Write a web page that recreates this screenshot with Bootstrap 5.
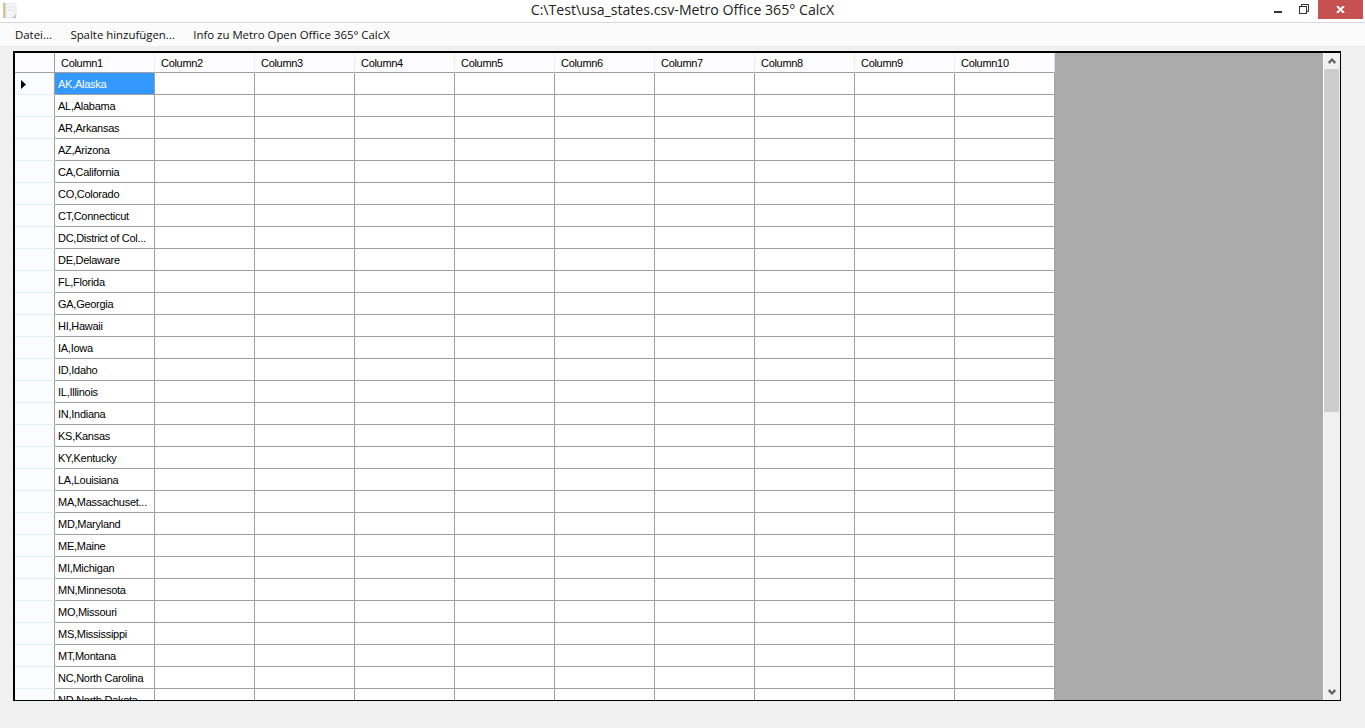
<!DOCTYPE html>
<html lang="de">
<head>
<meta charset="utf-8">
<title>C:\Test\usa_states.csv-Metro Office 365° CalcX</title>
<link href="https://cdn.jsdelivr.net/npm/bootstrap@5.3.0/dist/css/bootstrap.min.css" rel="stylesheet">
<style>
html, body { height: 100%; overflow: hidden; }
body { background: #f0f0f0; color: #000; }
.app-win { height: 728px; }
.app-title { height: 23px; background: #fff; border-bottom: 1px solid #d9d9d9; font: 14.15px/20px "Open Sans", sans-serif; color: #222; }
.app-doc { width: 14px; height: 16px; margin: 3px 0 0 3px; }
.app-name { left: 0; right: 0; top: 0; text-align: center; pointer-events: none; }
.win-btn { width: 25px; height: 19px; padding: 4px 2px 0 0; }
.win-min { width: 26px; padding: 11px 2px 0 0; }
.win-close { width: 45px; height: 19px; background: #c75050; margin-left: 1px; margin-right: 2px; }
.app-menu { height: 23px; background: #fbfbfb; font: 11.4px/23px "Open Sans", sans-serif; color: #111; padding-left: 15px; gap: 18.5px; }
.grid-frame { margin: 5px 24px 0 13px; height: 650px; border: 1px solid #000; border-left-width: 2px; border-top-width: 2px; }
.grid-area { background: #ababab; min-width: 0; overflow: hidden; }
.sheet { border-collapse: separate; border-spacing: 0; table-layout: fixed; width: 1040px; font: 11px "Liberation Sans", sans-serif; letter-spacing: -.27px; background: #fff; }
.sheet th, .sheet td { height: 22px; padding: 0 0 0 3px; border-right: 1px solid #a0a0a0; border-bottom: 1px solid #a0a0a0; white-space: nowrap; overflow: hidden; vertical-align: middle; font-weight: 400; }
.sheet thead th { height: 20px; padding-left: 6px; border-right-color: #e6efff; background: #fdfdff; letter-spacing: -.3px; }
.sheet thead th:first-child { border-right-color: #a0a0a0; }
.sheet thead th:last-child { border-right-color: #d5deee; }
.sheet th.rh { padding: 0 0 0 6px; border-bottom-color: #e6efff; background: #fafcff; }
.sheet td.cur { background: #3399ff; color: #fff; }
.rh-mark { margin-top: 1px; }
.rh-w { width: 40px; }
.col-w { width: 100px; }
.scroll-rail { width: 16px; margin-left: 1px; background: #f0f0f0; }
.scroll-btn { height: 16px; }
.scroll-thumb { height: 343px; background: #cdcdcd; margin: 0 1px 0 0; }
</style>
</head>
<body>
<div class="app-win d-flex flex-column">
  <header class="app-title d-flex justify-content-between position-relative">
    <svg class="app-doc" viewBox="0 0 14 16"><rect x="0" y="0" width="3" height="15" fill="#d8c49a"/><rect x="3" y="0" width="10" height="15" fill="#f3f5f8" stroke="#e3e6ea"/><path d="M5 4h6M5 7h6" stroke="#dfe6f2"/><path d="M9 15l4-4v4z" fill="#c9c9c9"/></svg>
    <div class="app-name position-absolute">C:\Test\usa_states.csv-Metro Office 365° CalcX</div>
    <div class="d-flex">
      <div class="win-btn win-min d-flex justify-content-center"><svg class="d-block" width="8" height="2"><rect width="8" height="2" fill="#333"/></svg></div>
      <div class="win-btn d-flex justify-content-center"><svg class="d-block" width="10" height="10" viewBox="0 0 10 10" fill="none" stroke="#333"><path d="M2.5 2.5V.5h7v7h-2"/><rect x=".5" y="2.5" width="7" height="7"/></svg></div>
      <div class="win-close d-flex align-items-center justify-content-center"><svg width="9" height="7" viewBox="0 0 9 7" fill="none" stroke="#fff" stroke-width="2"><path d="M1 0l7 7M8 0L1 7"/></svg></div>
    </div>
  </header>
  <nav class="app-menu d-flex">
    <span>Datei...</span><span>Spalte hinzufügen...</span><span>Info zu Metro Open Office 365° CalcX</span>
  </nav>
  <section class="grid-frame d-flex bg-white">
    <div class="grid-area flex-grow-1">
      <table class="sheet">
        <colgroup><col class="rh-w"><col class="col-w"><col class="col-w"><col class="col-w"><col class="col-w"><col class="col-w"><col class="col-w"><col class="col-w"><col class="col-w"><col class="col-w"><col class="col-w"></colgroup>
        <thead><tr><th></th><th>Column1</th><th>Column2</th><th>Column3</th><th>Column4</th><th>Column5</th><th>Column6</th><th>Column7</th><th>Column8</th><th>Column9</th><th>Column10</th></tr></thead>
        <tbody>
          <tr><th class="rh"><svg class="d-block rh-mark" width="5" height="9" viewBox="0 0 5 9"><path d="M0 0l5 4.5L0 9z" fill="#000"/></svg></th><td class="cur">AK,Alaska</td><td></td><td></td><td></td><td></td><td></td><td></td><td></td><td></td><td></td></tr>
          <tr><th class="rh"></th><td>AL,Alabama</td><td></td><td></td><td></td><td></td><td></td><td></td><td></td><td></td><td></td></tr>
          <tr><th class="rh"></th><td>AR,Arkansas</td><td></td><td></td><td></td><td></td><td></td><td></td><td></td><td></td><td></td></tr>
          <tr><th class="rh"></th><td>AZ,Arizona</td><td></td><td></td><td></td><td></td><td></td><td></td><td></td><td></td><td></td></tr>
          <tr><th class="rh"></th><td>CA,California</td><td></td><td></td><td></td><td></td><td></td><td></td><td></td><td></td><td></td></tr>
          <tr><th class="rh"></th><td>CO,Colorado</td><td></td><td></td><td></td><td></td><td></td><td></td><td></td><td></td><td></td></tr>
          <tr><th class="rh"></th><td>CT,Connecticut</td><td></td><td></td><td></td><td></td><td></td><td></td><td></td><td></td><td></td></tr>
          <tr><th class="rh"></th><td>DC,District of Col...</td><td></td><td></td><td></td><td></td><td></td><td></td><td></td><td></td><td></td></tr>
          <tr><th class="rh"></th><td>DE,Delaware</td><td></td><td></td><td></td><td></td><td></td><td></td><td></td><td></td><td></td></tr>
          <tr><th class="rh"></th><td>FL,Florida</td><td></td><td></td><td></td><td></td><td></td><td></td><td></td><td></td><td></td></tr>
          <tr><th class="rh"></th><td>GA,Georgia</td><td></td><td></td><td></td><td></td><td></td><td></td><td></td><td></td><td></td></tr>
          <tr><th class="rh"></th><td>HI,Hawaii</td><td></td><td></td><td></td><td></td><td></td><td></td><td></td><td></td><td></td></tr>
          <tr><th class="rh"></th><td>IA,Iowa</td><td></td><td></td><td></td><td></td><td></td><td></td><td></td><td></td><td></td></tr>
          <tr><th class="rh"></th><td>ID,Idaho</td><td></td><td></td><td></td><td></td><td></td><td></td><td></td><td></td><td></td></tr>
          <tr><th class="rh"></th><td>IL,Illinois</td><td></td><td></td><td></td><td></td><td></td><td></td><td></td><td></td><td></td></tr>
          <tr><th class="rh"></th><td>IN,Indiana</td><td></td><td></td><td></td><td></td><td></td><td></td><td></td><td></td><td></td></tr>
          <tr><th class="rh"></th><td>KS,Kansas</td><td></td><td></td><td></td><td></td><td></td><td></td><td></td><td></td><td></td></tr>
          <tr><th class="rh"></th><td>KY,Kentucky</td><td></td><td></td><td></td><td></td><td></td><td></td><td></td><td></td><td></td></tr>
          <tr><th class="rh"></th><td>LA,Louisiana</td><td></td><td></td><td></td><td></td><td></td><td></td><td></td><td></td><td></td></tr>
          <tr><th class="rh"></th><td>MA,Massachuset...</td><td></td><td></td><td></td><td></td><td></td><td></td><td></td><td></td><td></td></tr>
          <tr><th class="rh"></th><td>MD,Maryland</td><td></td><td></td><td></td><td></td><td></td><td></td><td></td><td></td><td></td></tr>
          <tr><th class="rh"></th><td>ME,Maine</td><td></td><td></td><td></td><td></td><td></td><td></td><td></td><td></td><td></td></tr>
          <tr><th class="rh"></th><td>MI,Michigan</td><td></td><td></td><td></td><td></td><td></td><td></td><td></td><td></td><td></td></tr>
          <tr><th class="rh"></th><td>MN,Minnesota</td><td></td><td></td><td></td><td></td><td></td><td></td><td></td><td></td><td></td></tr>
          <tr><th class="rh"></th><td>MO,Missouri</td><td></td><td></td><td></td><td></td><td></td><td></td><td></td><td></td><td></td></tr>
          <tr><th class="rh"></th><td>MS,Mississippi</td><td></td><td></td><td></td><td></td><td></td><td></td><td></td><td></td><td></td></tr>
          <tr><th class="rh"></th><td>MT,Montana</td><td></td><td></td><td></td><td></td><td></td><td></td><td></td><td></td><td></td></tr>
          <tr><th class="rh"></th><td>NC,North Carolina</td><td></td><td></td><td></td><td></td><td></td><td></td><td></td><td></td><td></td></tr>
          <tr><th class="rh"></th><td>ND,North Dakota</td><td></td><td></td><td></td><td></td><td></td><td></td><td></td><td></td><td></td></tr>
        </tbody>
      </table>
    </div>
    <aside class="scroll-rail d-flex flex-column">
      <div class="scroll-btn d-flex align-items-center justify-content-center"><svg width="8" height="6" viewBox="0 0 8 6"><path d="M4 0l4 4-1.500 2L4 3 1.500 6 0 4z" fill="#606060"/></svg></div>
      <div class="scroll-thumb"></div>
      <div class="flex-grow-1"></div>
      <div class="scroll-btn d-flex align-items-center justify-content-center"><svg width="8" height="6" viewBox="0 0 8 6"><path d="M4 6L8 2 6.500 0 4 3 1.500 0 0 2z" fill="#606060"/></svg></div>
    </aside>
  </section>
</div>
<script src="https://cdn.jsdelivr.net/npm/bootstrap@5.3.0/dist/js/bootstrap.bundle.min.js"></script>
</body>
</html>
